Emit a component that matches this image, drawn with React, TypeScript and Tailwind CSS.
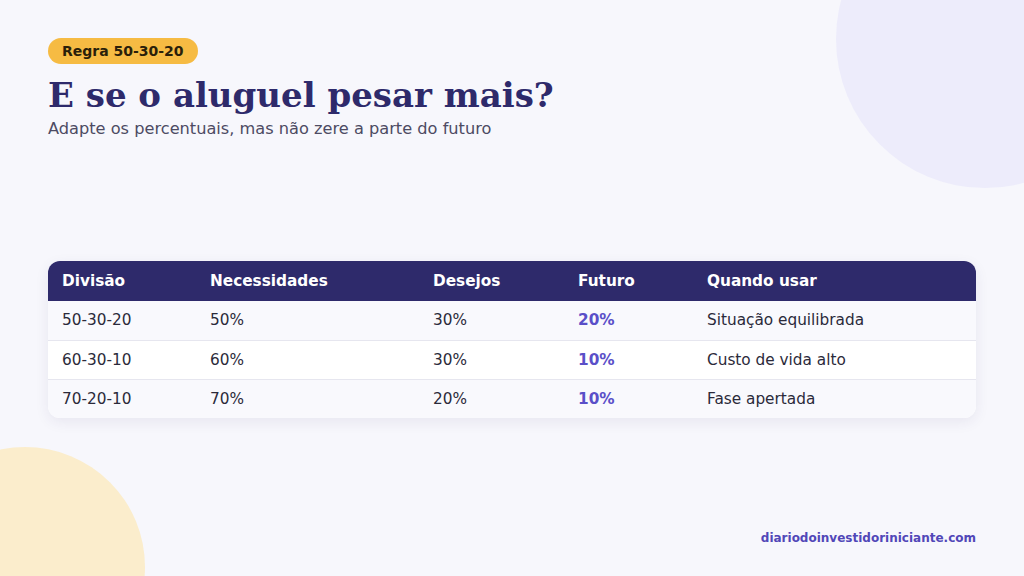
const rows = [
  { div: "50-30-20", nec: "50%", des: "30%", fut: "20%", uso: "Situação equilibrada" },
  { div: "60-30-10", nec: "60%", des: "30%", fut: "10%", uso: "Custo de vida alto" },
  { div: "70-20-10", nec: "70%", des: "20%", fut: "10%", uso: "Fase apertada" },
];

export default function App() {
  return (
    <div
      className="relative h-[576px] w-[1024px] overflow-hidden bg-[#f7f7fc]"
      style={{ fontFamily: '"DejaVu Sans", Verdana, sans-serif' }}
    >
      {/* decorative circles */}
      <div className="absolute right-[-110px] top-[-110px] h-[298px] w-[298px] rounded-full bg-[#edecfb]" />
      <div className="absolute bottom-[-111px] left-[-95px] h-[240px] w-[240px] rounded-full bg-[#fbedcc]" />

      <div className="relative flex h-full flex-col px-12 pt-[38px] pb-[29px]">
        <div>
          <span className="inline-block rounded-full bg-[#f6bb43] px-[14px] py-[4px] text-[14px] font-bold leading-[18px] text-[#2a1f0a]">
            Regra 50-30-20
          </span>
        </div>
        <h1
          className="mt-[9px] text-[34px] font-bold leading-[44px] text-[#2e2a6b]"
          style={{ fontFamily: '"DejaVu Serif", Georgia, serif' }}
        >
          E se o aluguel pesar mais?
        </h1>
        <p className="mt-[2px] text-[16.2px] leading-[20px] text-[#4d4b63]">
          Adapte os percentuais, mas não zere a parte do futuro
        </p>

        <div className="mt-[122px] overflow-hidden rounded-xl bg-white shadow-[0_4px_14px_rgba(46,42,107,0.08)]">
          <table className="w-full border-collapse text-left text-[15.3px]">
            <thead>
              <tr className="h-[40px] bg-[#2e2a6b] text-white">
                <th className="w-[148px] pl-[14px] pt-[1px] font-bold">Divisão</th>
                <th className="w-[223px] pl-[14px] pt-[1px] font-bold">Necessidades</th>
                <th className="w-[145px] pl-[14px] pt-[1px] font-bold">Desejos</th>
                <th className="w-[129px] pl-[14px] pt-[1px] font-bold">Futuro</th>
                <th className="pl-[14px] pt-[1px] font-bold">Quando usar</th>
              </tr>
            </thead>
            <tbody className="text-[#2b2a3a]">
              {rows.map((r, i) => (
                <tr
                  key={r.div}
                  className={`h-[39px] ${i % 2 === 0 ? "bg-[#f9f9fd]" : "bg-white"} ${i > 0 ? "border-t border-[#e6e6ef]" : ""}`}
                >
                  <td className="pl-[14px] pt-[1px]">{r.div}</td>
                  <td className="pl-[14px] pt-[1px]">{r.nec}</td>
                  <td className="pl-[14px] pt-[1px]">{r.des}</td>
                  <td className="pl-[14px] pt-[1px] font-bold text-[#5a4fc8]">{r.fut}</td>
                  <td className="pl-[14px] pt-[1px]">{r.uso}</td>
                </tr>
              ))}
            </tbody>
          </table>
        </div>

        <div className="mt-auto text-right text-[12px] font-bold text-[#5147b8]">
          diariodoinvestidoriniciante.com
        </div>
      </div>
    </div>
  );
}
